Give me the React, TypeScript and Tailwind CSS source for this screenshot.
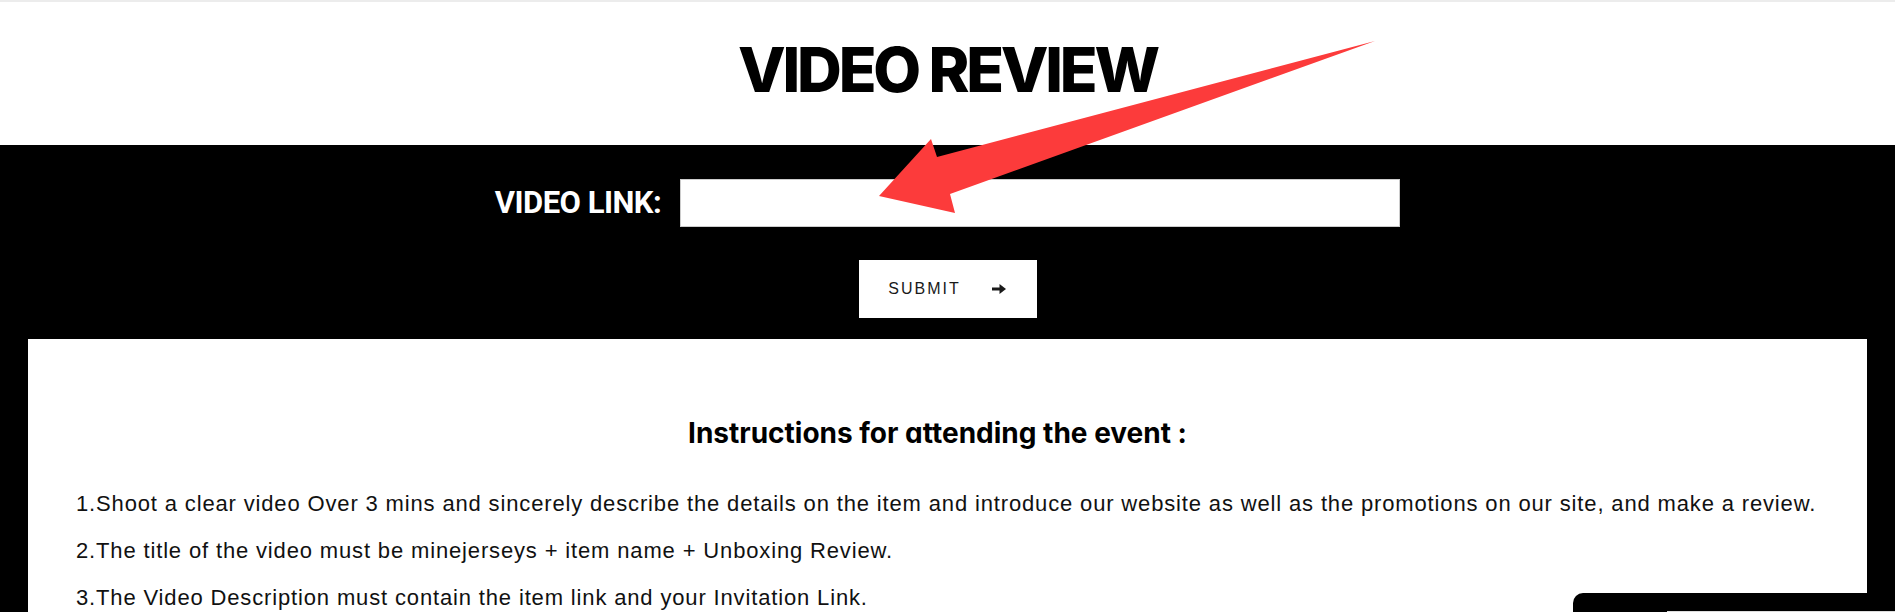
import React from 'react';

const steps = [
  '1.Shoot a clear video Over 3 mins and sincerely describe the details on the item and introduce our website as well as the promotions on our site, and make a review.',
  '2.The title of the video must be minejerseys + item name + Unboxing Review.',
  '3.The Video Description must contain the item link and your Invitation Link.',
];

const ArrowIcon = () => (
  <svg width="16" height="14" viewBox="0 0 16 14" fill="none">
    <path d="M1 7H10" stroke="#1a1a1a" strokeWidth="3" />
    <path d="M8.5 2L15 7L8.5 12Z" fill="#1a1a1a" />
  </svg>
);

export default function App() {
  return (
    <div className="relative h-[612px] w-full overflow-hidden bg-black">
      {/* Header */}
      <div className="flex h-[145px] flex-col items-center border-t-2 border-[#ececec] bg-white">
        <h1 className="mt-[30px] font-['Inter',sans-serif] text-[62px] font-extrabold leading-[76px] tracking-[-3.2px] text-black">
          VIDEO REVIEW
        </h1>
      </div>

      {/* Form */}
      <div className="flex flex-col items-center bg-black px-[28px]">
        <div className="mt-[34px] flex items-center gap-[19px]">
          <label className="font-['Roboto',sans-serif] text-[31px] font-bold tracking-[-0.5px] text-white">
            VIDEO LINK:
          </label>
          <input
            type="text"
            className="h-[48px] w-[720px] border border-[#cccccc] bg-white px-3 text-[16px] outline-none"
          />
        </div>
        <button className="mt-[33px] flex h-[58px] w-[178px] items-center justify-center gap-[30px] bg-white">
          <span className="font-['Liberation_Sans',sans-serif] text-[16px] tracking-[2px] text-[#1a1a1a]">
            SUBMIT
          </span>
          <ArrowIcon />
        </button>

        {/* Instructions card */}
        <div className="mt-[21px] w-full bg-white px-[48px] pb-10 pt-[73px]">
          <h2 className="pr-[20px] text-center font-['Inter',sans-serif] text-[28px] font-bold tracking-[0px] text-black [font-feature-settings:'cv11']">
            Instructions for attending the event :
          </h2>
          <ul className="mt-[37px] flex flex-col gap-[21px]">
            {steps.map((s) => (
              <li
                key={s}
                className="whitespace-nowrap font-['Liberation_Sans',sans-serif] text-[22px] leading-[26px] tracking-[0.85px] text-[#111]"
              >
                {s}
              </li>
            ))}
          </ul>
        </div>
      </div>

      {/* Red annotation arrow */}
      <svg className="pointer-events-none absolute left-0 top-0" width="1895" height="612">
        <polygon
          points="1375,41 937,157 931,139 879,196 955,213 950,194"
          fill="#fc3b3b"
        />
      </svg>

      {/* Chat widget tab */}
      <div className="absolute left-[1573px] top-[593px] h-[30px] w-[322px] rounded-tl-[10px] bg-black">
        <div className="absolute bottom-[11px] left-[94px] right-0 h-px bg-[#dddddd]" />
      </div>
    </div>
  );
}
